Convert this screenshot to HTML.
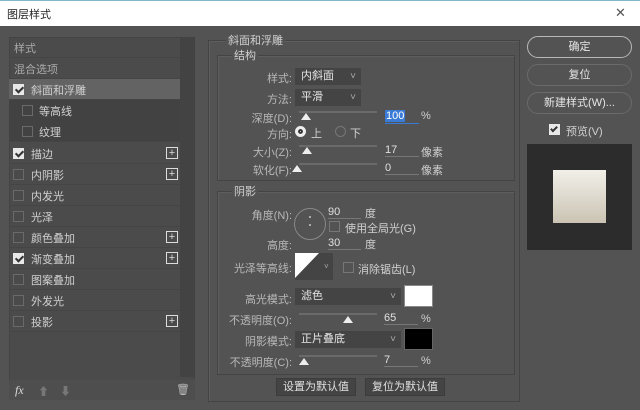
<!DOCTYPE html><html><head><meta charset="utf-8"><style>
*{margin:0;padding:0;box-sizing:border-box}
body{width:640px;height:410px;overflow:hidden;background:#535353;position:relative;font-family:"Liberation Sans","Noto Sans CJK SC",sans-serif;font-size:11px;color:#d0d0d0}
.a{position:absolute}
.t{position:absolute;white-space:nowrap}
.row{position:absolute;left:9px;width:171px;height:21px;border-bottom:1px solid #454545}
.row span{position:absolute;left:22px;top:3px}
.cb{position:absolute;left:4px;top:5px;width:11px;height:11px;border:1px solid #6a6a6a;background:#4a4a4a}
.cb.on{background:#e8e8e8;border-color:#e8e8e8}
.cb.on:after{content:"";position:absolute;left:3px;top:0px;width:3px;height:6px;border:solid #333;border-width:0 2px 2px 0;transform:rotate(45deg)}
.plus{position:absolute;left:157px;top:4px;width:12px;height:12px;border:1px solid #ddd;color:#ddd;font-size:11px;line-height:10px;text-align:center}
.box{position:absolute;border:1px solid #444;box-shadow:inset 1px 1px 0 #5e5e5e}
.lab{position:absolute;text-align:right;width:80px;color:#b8b8b8}
.sel{position:absolute;background:#444;height:17px;color:#e6e6e6;padding-left:6px;line-height:17px}
.sel:after{content:"˅";position:absolute;right:5px;top:0;color:#aaa;font-size:10px}
.sl{position:absolute;height:2px;background:#6a6a6a}
.th{position:absolute;width:0;height:0;border-left:5px solid transparent;border-right:5px solid transparent;border-bottom:7px solid #eee}
.num{position:absolute;border-bottom:1px solid #777;width:34px;height:13px;color:#e0e0e0;line-height:12px}
.btn{position:absolute;left:527px;width:105px;height:22px;border:1px solid #8a8a8a;border-radius:11px;text-align:center;line-height:20px;color:#e6e6e6}
.bb{position:absolute;height:18px;background:#444;border:1px solid #3c3c3c;text-align:center;line-height:16px;color:#e0e0e0}
</style></head><body>
<div class="a" style="left:0;top:0;width:640px;height:26px;background:#fff;border-top:1px solid #7fb7c8"></div>
<div class="t" style="left:7px;top:6px;color:#222;font-size:11px">图层样式</div>
<div class="t" style="left:615px;top:5px;color:#555;font-size:13px;font-weight:300">✕</div>

<div class="a" style="left:9px;top:37px;width:186px;height:362px;background:#4b4b4b;border:1px solid #444"></div>
<div class="a" style="left:180px;top:37px;width:15px;height:340px;background:#434343"></div>
<div class="row" style="top:37px"><span style="left:5px;color:#aaa">样式</span></div>
<div class="row" style="top:58px"><span style="left:5px;color:#aaa">混合选项</span></div>
<div class="row" style="top:79px;background:#636363"><div class="cb on"></div><span>斜面和浮雕</span></div>
<div class="row" style="top:100px;background:#424242;border:0"><div class="cb" style="left:13px;background:#424242"></div><span style="left:30px">等高线</span></div>
<div class="row" style="top:121px;background:#424242"><div class="cb" style="left:13px;background:#424242"></div><span style="left:30px">纹理</span></div>
<div class="row" style="top:143px"><div class="cb on"></div><span>描边</span><div class="plus">+</div></div>
<div class="row" style="top:164px"><div class="cb"></div><span>内阴影</span><div class="plus">+</div></div>
<div class="row" style="top:185px"><div class="cb"></div><span>内发光</span></div>
<div class="row" style="top:206px"><div class="cb"></div><span>光泽</span></div>
<div class="row" style="top:227px"><div class="cb"></div><span>颜色叠加</span><div class="plus">+</div></div>
<div class="row" style="top:248px"><div class="cb on"></div><span>渐变叠加</span><div class="plus">+</div></div>
<div class="row" style="top:269px"><div class="cb"></div><span>图案叠加</span></div>
<div class="row" style="top:290px"><div class="cb"></div><span>外发光</span></div>
<div class="row" style="top:311px"><div class="cb"></div><span>投影</span><div class="plus">+</div></div>
<div class="a" style="left:9px;top:380px;width:186px;height:20px;background:#4e4e4e"></div>
<div class="t" style="left:15px;top:383px;font-style:italic;color:#ddd;font-family:'Liberation Serif',serif;font-size:12px">fx</div>
<div class="t" style="left:38px;top:383px;color:#777">⬆</div><div class="t" style="left:60px;top:383px;color:#777">⬇</div>
<div class="t" style="left:176px;top:383px;color:#bbb">🗑</div>

<div class="box" style="left:208px;top:40px;width:312px;height:362px"></div>
<div class="t" style="left:226px;top:32px;background:#535353;padding:0 2px">斜面和浮雕</div>
<div class="box" style="left:217px;top:55px;width:298px;height:126px"></div>
<div class="t" style="left:232px;top:47px;background:#535353;padding:0 2px">结构</div>
<div class="lab" style="left:212px;top:70px">样式:</div><div class="sel" style="left:295px;top:68px;width:66px">内斜面</div>
<div class="lab" style="left:212px;top:91px">方法:</div><div class="sel" style="left:295px;top:89px;width:66px">平滑</div>
<div class="lab" style="left:212px;top:110px">深度(D):</div><div class="sl" style="left:299px;top:111px;width:78px"></div><div class="th" style="left:301px;top:113px"></div>
<div class="t" style="left:385px;top:110px;background:#3a7bd5;color:#fff;padding:0 1px;line-height:12px">100</div><div class="a" style="left:385px;top:123px;width:34px;height:1px;background:#3a7bd5"></div><div class="t" style="left:421px;top:110px">%</div>
<div class="lab" style="left:212px;top:126px">方向:</div>
<div class="a" style="left:295px;top:126px;width:11px;height:11px;border-radius:50%;background:#eee;border:3px solid #eee;box-shadow:inset 0 0 0 2px #333"></div><div class="t" style="left:311px;top:125px">上</div>
<div class="a" style="left:335px;top:126px;width:11px;height:11px;border-radius:50%;border:1px solid #777"></div><div class="t" style="left:350px;top:125px">下</div>
<div class="lab" style="left:212px;top:144px">大小(Z):</div><div class="sl" style="left:299px;top:145px;width:78px"></div><div class="th" style="left:302px;top:147px"></div>
<div class="num" style="left:385px;top:144px">17</div><div class="t" style="left:421px;top:144px">像素</div>
<div class="lab" style="left:212px;top:162px">软化(F):</div><div class="sl" style="left:299px;top:163px;width:78px"></div><div class="th" style="left:292px;top:165px"></div>
<div class="num" style="left:385px;top:162px">0</div><div class="t" style="left:421px;top:162px">像素</div>

<div class="box" style="left:217px;top:191px;width:298px;height:184px"></div>
<div class="t" style="left:232px;top:183px;background:#535353;padding:0 2px">阴影</div>
<div class="lab" style="left:212px;top:207px">角度(N):</div>
<div class="a" style="left:294px;top:208px;width:32px;height:32px;border-radius:50%;border:1px solid #888"></div>
<div class="a" style="left:309px;top:216px;width:2px;height:2px;background:#aaa"></div><div class="a" style="left:309px;top:224px;width:2px;height:2px;background:#aaa"></div>
<div class="num" style="left:328px;top:206px;width:33px">90</div><div class="t" style="left:365px;top:205px">度</div>
<div class="a" style="left:329px;top:221px;width:11px;height:11px;border:1px solid #777"></div><div class="t" style="left:345px;top:220px">使用全局光(G)</div>
<div class="lab" style="left:212px;top:237px">高度:</div><div class="num" style="left:328px;top:237px;width:33px">30</div><div class="t" style="left:365px;top:236px">度</div>
<div class="lab" style="left:212px;top:260px">光泽等高线:</div>
<svg class="a" style="left:295px;top:253px" width="38" height="27"><rect width="38" height="27" fill="#444"/><polygon points="0,0 24,0 0,25" fill="#fff"/><text x="29" y="16" fill="#aaa" font-size="8">˅</text></svg>
<div class="a" style="left:343px;top:262px;width:11px;height:11px;border:1px solid #777"></div><div class="t" style="left:358px;top:261px">消除锯齿(L)</div>
<div class="lab" style="left:212px;top:291px">高光模式:</div><div class="sel" style="left:295px;top:288px;width:106px">滤色</div>
<div class="a" style="left:404px;top:285px;width:29px;height:22px;background:#fff;border:1px solid #888"></div>
<div class="lab" style="left:212px;top:312px">不透明度(O):</div><div class="sl" style="left:299px;top:313px;width:78px"></div><div class="th" style="left:343px;top:316px"></div>
<div class="num" style="left:384px;top:312px">65</div><div class="t" style="left:421px;top:313px">%</div>
<div class="lab" style="left:212px;top:333px">阴影模式:</div><div class="sel" style="left:295px;top:331px;width:106px">正片叠底</div>
<div class="a" style="left:404px;top:328px;width:29px;height:22px;background:#000;border:1px solid #666"></div>
<div class="lab" style="left:212px;top:354px">不透明度(C):</div><div class="sl" style="left:299px;top:355px;width:78px"></div><div class="th" style="left:299px;top:358px"></div>
<div class="num" style="left:384px;top:354px">7</div><div class="t" style="left:421px;top:355px">%</div>
<div class="bb" style="left:276px;top:378px;width:80px">设置为默认值</div>
<div class="bb" style="left:365px;top:378px;width:80px">复位为默认值</div>

<div class="btn" style="top:36px;border-color:#b8b8b8">确定</div>
<div class="btn" style="top:64px;border-color:#6a6a6a">复位</div>
<div class="btn" style="top:92px;border-color:#6a6a6a">新建样式(W)...</div>
<div class="a" style="left:549px;top:124px;width:11px;height:11px;background:#e8e8e8"></div>
<div class="a" style="left:552px;top:125px;width:4px;height:7px;border:solid #333;border-width:0 2px 2px 0;transform:rotate(45deg)"></div>
<div class="t" style="left:566px;top:123px">预览(V)</div>
<div class="a" style="left:527px;top:144px;width:105px;height:106px;background:#2c2c2c"></div>
<div class="a" style="left:553px;top:170px;width:53px;height:53px;background:linear-gradient(#f1efe8,#cbc4b4)"></div>
</body></html>
